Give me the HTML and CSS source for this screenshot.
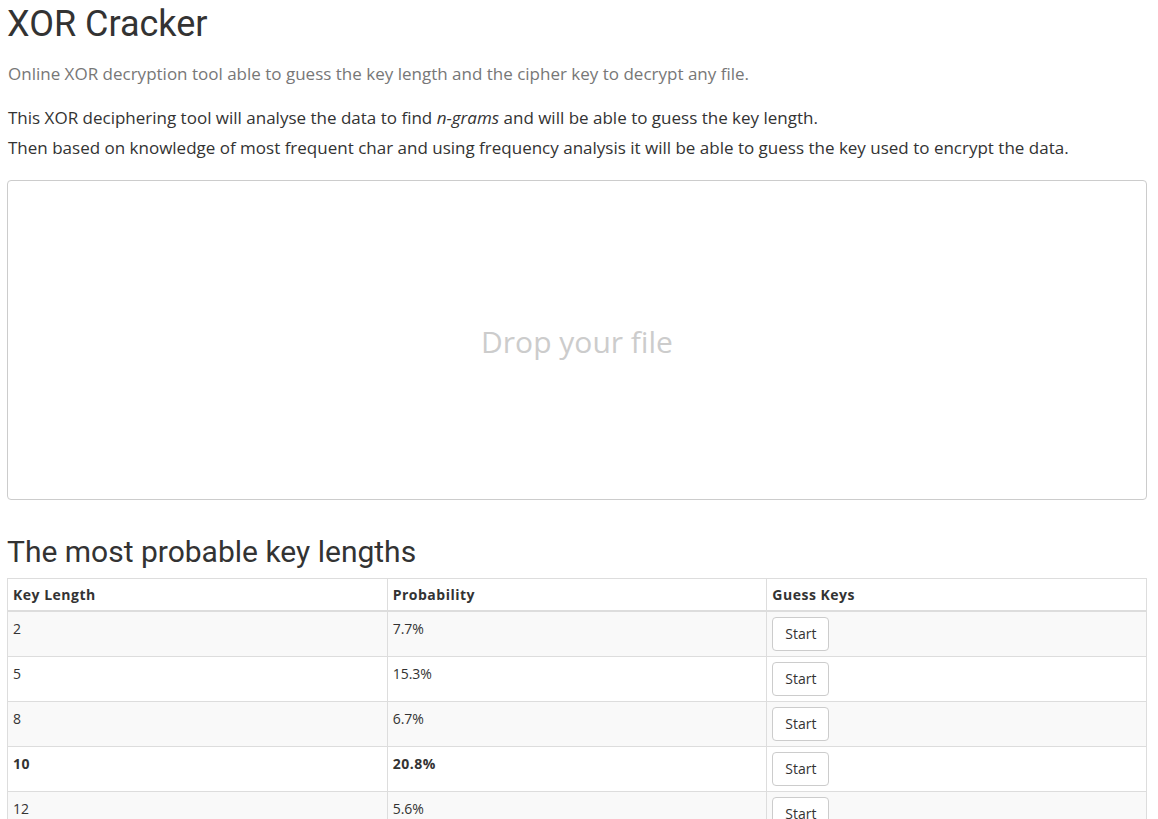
FILE: index.html
```html
<!DOCTYPE html>
<html lang="en">
<head>
<meta charset="utf-8">
<title>XOR Cracker</title>
<link rel="stylesheet" href="styles.css">
</head>
<body>
<div class="container">
  <h1 class="title">XOR Cracker</h1>
  <p class="lead">Online XOR decryption tool able to guess the key length and the cipher key to decrypt any file.</p>
  <p class="intro">This XOR deciphering tool will analyse the data to find <em>n-grams</em> and will be able to guess the key length.<br>Then based on knowledge of most frequent char and using frequency analysis it will be able to guess the key used to encrypt the data.</p>
  <div class="dropzone"><span class="drop-text">Drop your file</span></div>
  <h2 class="subtitle">The most probable key lengths</h2>
  <table class="keys">
    <thead>
      <tr><th>Key Length</th><th>Probability</th><th>Guess Keys</th></tr>
    </thead>
    <tbody>
      <tr><td>2</td><td>7.7%</td><td><button class="btn">Start</button></td></tr>
      <tr><td>5</td><td>15.3%</td><td><button class="btn">Start</button></td></tr>
      <tr><td>8</td><td>6.7%</td><td><button class="btn">Start</button></td></tr>
      <tr class="best"><td>10</td><td>20.8%</td><td><button class="btn">Start</button></td></tr>
      <tr><td>12</td><td>5.6%</td><td><button class="btn">Start</button></td></tr>
    </tbody>
  </table>
</div>
</body>
</html>
```
FILE: styles.css
```css
html, body {
  margin: 0;
  padding: 0;
  background: #fff;
}
body {
  font-family: "Open Sans", "DejaVu Sans", sans-serif;
  font-size: 17px;
  color: #333;
}
.container {
  width: 1140px;
  margin-left: 7px;
}
.title {
  font-family: Roboto, "Open Sans", sans-serif;
  font-weight: 400;
  font-size: 36px;
  line-height: 40px;
  margin: 4px 0 0 0;
  color: #333;
}
.lead {
  margin: 18px 0 0 1px;
  line-height: 24px;
  color: #777;
  font-size: 17px;
}
.intro {
  margin: 17px 0 0 1px;
  line-height: 30px;
}
.dropzone {
  margin-top: 17px;
  height: 318px;
  border: 1px solid #ccc;
  border-radius: 4px;
  display: flex;
  align-items: center;
  justify-content: center;
}
.drop-text {
  font-size: 30px;
  color: #ccc;
  padding-top: 2px;
}
.subtitle {
  font-family: Roboto, "Open Sans", sans-serif;
  font-weight: 400;
  font-size: 30px;
  line-height: 33px;
  margin: 35px 0 10px 0;
  color: #333;
}
.keys {
  width: 1140px;
  border-collapse: collapse;
  border: 1px solid #ddd;
  font-size: 14px;
  table-layout: fixed;
}
.keys th, .keys td {
  border: 1px solid #ddd;
  padding: 5px;
  line-height: 20px;
  text-align: left;
}
.keys th {
  border-bottom: 2px solid #ddd;
  vertical-align: bottom;
  font-weight: 700;
  letter-spacing: 0.5px;
  padding-top: 6px;
}
.keys td {
  vertical-align: top;
  line-height: 24px;
}
.keys tbody tr:nth-child(odd) {
  background: #f9f9f9;
}
.keys tr.best td {
  font-weight: 700;
  letter-spacing: 0.5px;
}
.btn {
  font-family: "Open Sans", "DejaVu Sans", sans-serif;
  font-size: 14px;
  font-weight: 400;
  line-height: 20px;
  padding: 6px 12px;
  color: #333;
  background: #fff;
  border: 1px solid #ccc;
  border-radius: 4px;
  margin: 0;
  display: inline-block;
  vertical-align: top;
  letter-spacing: 0;
}
```
